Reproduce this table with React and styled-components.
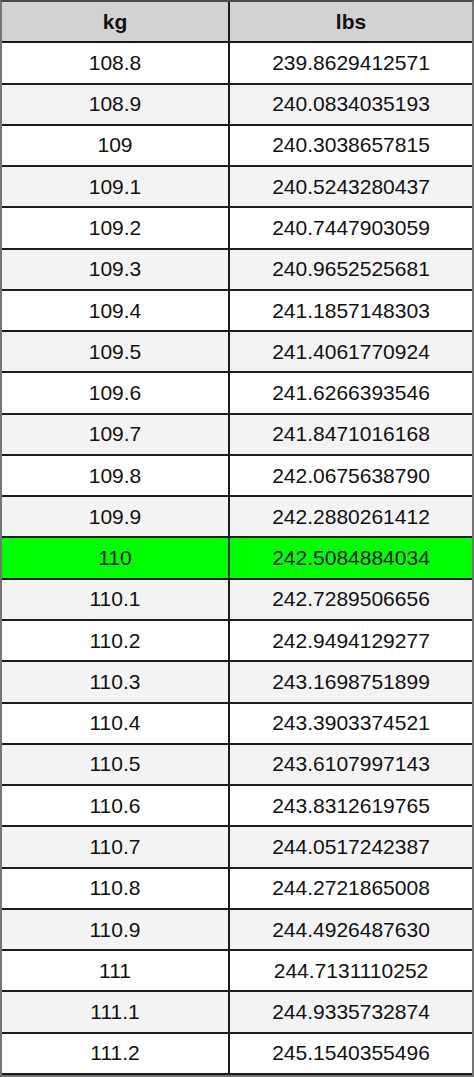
import React from "react";
import styled, { createGlobalStyle } from "styled-components";

const rows = [
  ["108.8", "239.8629412571"],
  ["108.9", "240.0834035193"],
  ["109", "240.3038657815"],
  ["109.1", "240.5243280437"],
  ["109.2", "240.7447903059"],
  ["109.3", "240.9652525681"],
  ["109.4", "241.1857148303"],
  ["109.5", "241.4061770924"],
  ["109.6", "241.6266393546"],
  ["109.7", "241.8471016168"],
  ["109.8", "242.0675638790"],
  ["109.9", "242.2880261412"],
  ["110", "242.5084884034"],
  ["110.1", "242.7289506656"],
  ["110.2", "242.9494129277"],
  ["110.3", "243.1698751899"],
  ["110.4", "243.3903374521"],
  ["110.5", "243.6107997143"],
  ["110.6", "243.8312619765"],
  ["110.7", "244.0517242387"],
  ["110.8", "244.2721865008"],
  ["110.9", "244.4926487630"],
  ["111", "244.7131110252"],
  ["111.1", "244.9335732874"],
  ["111.2", "245.1540355496"],
];

const GlobalStyle = createGlobalStyle`
  html, body {
    margin: 0;
    padding: 0;
    background: #ffffff;
  }
`;

function App() {
  return (
    <>
      <GlobalStyle />
      <Table>
        <HeaderRow>
          <HeadCell>kg</HeadCell>
          <HeadCell>lbs</HeadCell>
        </HeaderRow>
        {rows.map(([kg, lbs], i) => (
          <Row key={kg} $shade={kg === "110" ? "green" : i % 2 ? "gray" : "white"}>
            <Cell>{kg}</Cell>
            <Cell>{lbs}</Cell>
          </Row>
        ))}
      </Table>
    </>
  );
}

const shades = {
  white: "#ffffff",
  gray: "#f3f3f3",
  green: "#00ff00",
};

const Table = styled.div`
  box-sizing: border-box;
  width: 474px;
  height: 1077px;
  display: grid;
  grid-template-rows: repeat(26, 1fr);
  border: 2px solid #757575;
  border-top-color: #4a4a4a;
  font-family: "Liberation Sans", Arial, sans-serif;
  color: #111111;
`;

const Row = styled.div`
  display: grid;
  grid-template-columns: 228px 1fr;
  border-bottom: 2px solid #1c1c1c;
  background: ${(p) => shades[p.$shade]};
`;

const HeaderRow = styled(Row)`
  background: #d2d2d2;
`;

const Cell = styled.div`
  display: flex;
  align-items: center;
  justify-content: center;
  font-size: 21px;
  &:first-child {
    border-right: 2px solid #1c1c1c;
  }
`;

const HeadCell = styled(Cell)`
  font-weight: bold;
`;

export default App;
